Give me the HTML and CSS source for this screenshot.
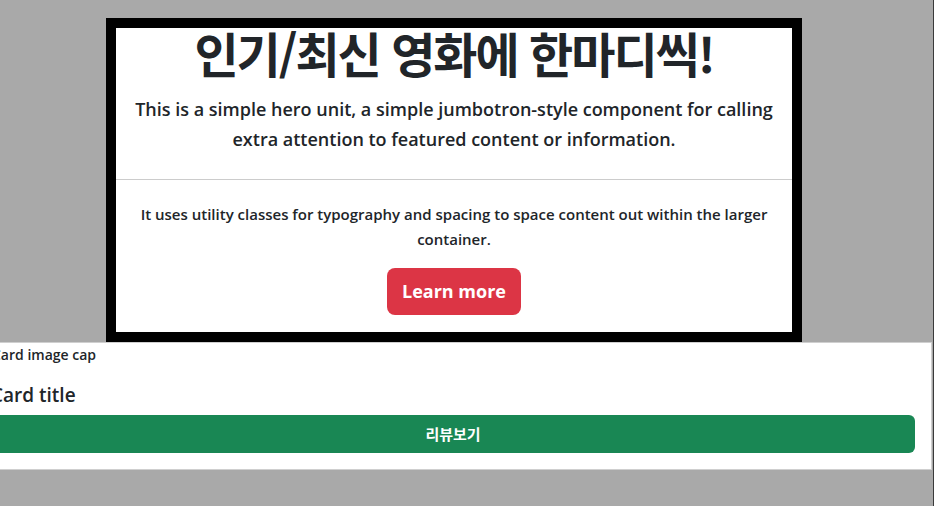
FILE: index.html
```html
<!DOCTYPE html>
<html lang="ko">
<head>
<meta charset="utf-8">
<title>영화 한마디</title>
<link rel="stylesheet" href="styles.css">
</head>
<body>
<section class="jumbo">
  <h1 class="jumbo-title">인기/최신 영화에 한마디씩!</h1>
  <p class="lead">This is a simple hero unit, a simple jumbotron-style component for calling extra attention to featured content or information.</p>
  <hr class="divider">
  <p class="desc">It uses utility classes for typography and spacing to space content out within the larger container.</p>
  <a class="btn-learn" href="#">Learn more</a>
</section>
<div class="card">
  <div class="card-img">Card image cap</div>
  <div class="card-body">
    <h5 class="card-title">Card title</h5>
    <a class="btn-review" href="#">리뷰보기</a>
  </div>
</div>
</body>
</html>
```
FILE: styles.css
```css
html, body {
  margin: 0;
  padding: 0;
}
body {
  background: #a9a9a9;
  color: #212529;
  font-family: "Open Sans", "Noto Sans CJK KR", sans-serif;
  overflow: hidden;
  height: 506px;
}
body::after {
  content: "";
  position: fixed;
  top: 0;
  right: 0;
  bottom: 0;
  width: 1px;
  background: #3a3a3a;
}
.jumbo {
  box-sizing: border-box;
  width: 696px;
  margin: 18px 0 0 106px;
  border: 10px solid #000;
  background: #fff;
  text-align: center;
  padding: 0 16px 17px;
}
.jumbo-title {
  margin: 0;
  font-family: "Noto Sans CJK KR", sans-serif;
  font-weight: 700;
  font-size: 48px;
  line-height: 48px;
  letter-spacing: -2px;
}
.lead {
  margin: 18px 0 0;
  font-size: 18px;
  font-weight: 600;
  line-height: 30px;
}
.divider {
  margin: 25px -16px 0;
  border: 0;
  border-top: 1px solid #ccc;
}
.desc {
  margin: 22px 0 0;
  font-size: 15px;
  font-weight: 600;
  line-height: 25px;
}
.btn-learn {
  display: inline-block;
  margin-top: 16px;
  width: 134px;
  height: 47px;
  line-height: 47px;
  border-radius: 8px;
  background: #dc3545;
  color: #fff;
  font-size: 18px;
  font-weight: 700;
  text-decoration: none;
}
.card {
  box-sizing: border-box;
  width: 958px;
  margin-left: -26px;
  background: #fff;
  border: 1px solid #cfcfcf;
}
.card-img {
  padding-left: 17px;
  font-size: 14px;
  font-weight: 600;
  line-height: 24px;
}
.card-body {
  padding: 16px;
}
.card-title {
  margin: 0 0 8px;
  font-size: 19px;
  font-weight: 600;
  line-height: 24px;
}
.btn-review {
  display: block;
  height: 38px;
  line-height: 38px;
  border-radius: 6px;
  background: #198754;
  color: #fff;
  text-align: center;
  font-family: "Noto Sans CJK KR", sans-serif;
  font-size: 15px;
  font-weight: 700;
  text-decoration: none;
}
```
